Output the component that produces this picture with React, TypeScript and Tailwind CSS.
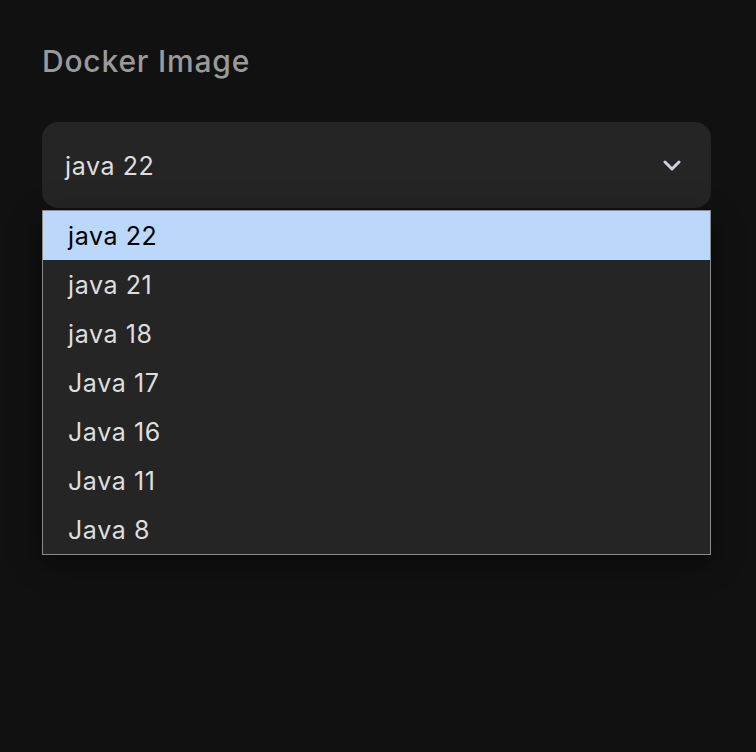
const OPTIONS = ['java 22', 'java 21', 'java 18', 'Java 17', 'Java 16', 'Java 11', 'Java 8'];

export default function App() {
  const selected = 'java 22';

  return (
    <div className="h-[752px] w-[756px] bg-[#111111] font-['Inter','Noto_Sans',sans-serif]">
      <div className="pl-[42px] pr-[45px] pt-[43px]">
        <h2 className="text-[30px] font-medium leading-[36px] tracking-[0.8px] text-[#9a9a9a]">Docker Image</h2>

        <div className="relative mt-[43px]">
          {/* Select trigger */}
          <button className="flex h-[86px] w-full items-center justify-between rounded-2xl bg-[#252525] pl-[23px] pr-[30px] text-[25px] tracking-[0.6px] text-[#dedede]">
            <span className="pt-[4px]">{selected}</span>
            <svg width="18" height="11" viewBox="0 0 18 11" fill="none">
              <path d="M2 2l7 7 7-7" stroke="#c9d3e0" strokeWidth="3" strokeLinecap="round" strokeLinejoin="round" />
            </svg>
          </button>

          {/* Open option list */}
          <ul className="absolute left-0 right-0 top-[88px] border border-[#8a8a8a] bg-[#252525] shadow-[0_8px_24px_rgba(0,0,0,0.5)]">
            {OPTIONS.map((opt) => (
              <li
                key={opt}
                className={
                  opt === selected
                    ? 'flex h-[49px] items-center bg-[#bbd8fb] pl-[25px] pt-[3px] text-[25px] tracking-[0.6px] text-black'
                    : 'flex h-[49px] items-center pl-[25px] pt-[3px] text-[25px] tracking-[0.6px] text-[#dedede]'
                }
              >
                {opt}
              </li>
            ))}
          </ul>
        </div>
      </div>
    </div>
  );
}
